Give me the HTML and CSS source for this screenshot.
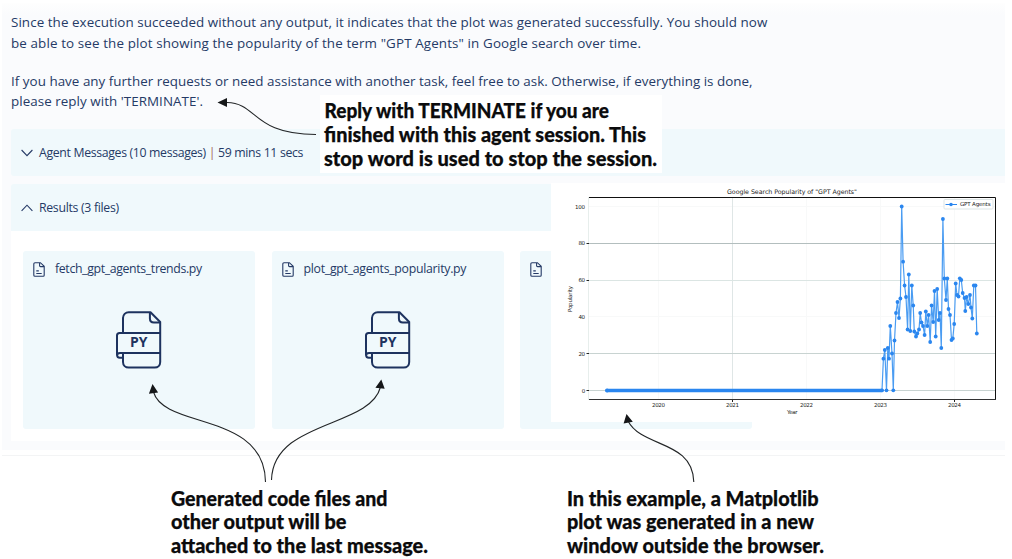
FILE: index.html
```
<!DOCTYPE html>
<html lang="en">
<head>
<meta charset="utf-8">
<title>Agent session results</title>
<link rel="stylesheet" href="styles.css">
</head>
<body>
<svg class="defs" width="0" height="0" aria-hidden="true">
  <symbol id="doc" viewBox="0 0 12 15">
    <path d="M2 .7h5.4l3.800 3.600v9c0 .6-.4 1-1 1H2c-.6 0-1.200-.4-1.200-1V1.700c0-.6.5-1 1.200-1zM6.600.8v2.900c0 .6.4.9.9.9h3.500M3.300 8.900h2.500M3.300 11.500h5.400" fill="none" stroke="currentColor" stroke-width="1.1"/>
  </symbol>
  <symbol id="py" viewBox="0 0 46 58">
    <g fill="none" stroke="currentColor" stroke-width="2" stroke-linejoin="round">
      <path d="M7 21.500V7c0-3.300 2.500-5.700 5.700-5.700H34.500L44.200 11v40c0 3.200-2.300 5.600-5.500 5.600H12.700C9.500 56.600 7 54.200 7 51V42"/>
      <path d="M33.900 1.500v6c0 2.700 1.400 4 4 4H44"/>
      <path d="M44.200 22H3.600c-1.600 0-2.600 1-2.600 2.600V43.500c0 2 1 3.200 2.800 3.200H7M44.200 42H4c-1.700 0-3 .5-3 2.500"/>
    </g>
  </symbol>
</svg>
<main class="page">
  <section class="panel">
    <div class="message">
      <p><span class="l1">Since the execution succeeded without any output, it indicates that the plot was generated successfully. You should now</span><br><span class="l2">be able to see the plot showing the popularity of the term "GPT Agents" in Google search over time.</span></p>
      <p><span class="l3">If you have any further requests or need assistance with another task, feel free to ask. Otherwise, if everything is done,</span><br><span class="l4">please reply with 'TERMINATE'.</span></p>
    </div>
    <div class="bar">
      <svg class="chev" viewBox="0 0 12 8"><path d="M.6 1l5.400 5.600L11.400 1"/></svg>
      <span class="b1">Agent Messages (10 messages) <i>|</i> 59 mins 11 secs</span>
    </div>
    <div class="bar">
      <svg class="chev" viewBox="0 0 12 8"><path d="M.6 6.800L6 1.200l5.400 5.600"/></svg>
      <span class="b2">Results (3 files)</span>
    </div>
    <div class="files">
      <article class="card">
        <header><svg class="doc"><use href="#doc"/></svg><span class="f1">fetch_gpt_agents_trends.py</span></header>
        <svg class="py" viewBox="0 0 46 58"><use href="#py"/><text x="14" y="36.300" textLength="17.500" lengthAdjust="spacingAndGlyphs">PY</text></svg>
      </article>
      <article class="card">
        <header><svg class="doc"><use href="#doc"/></svg><span class="f2">plot_gpt_agents_popularity.py</span></header>
        <svg class="py" viewBox="0 0 46 58"><use href="#py"/><text x="14" y="36.300" textLength="17.500" lengthAdjust="spacingAndGlyphs">PY</text></svg>
      </article>
      <article class="card">
        <header><svg class="doc"><use href="#doc"/></svg></header>
      </article>
    </div>
  </section>
  <div class="rule"></div>
</main>
<svg class="plot" viewBox="551 183 461 239">
  <rect x="551" y="183" width="461" height="239" fill="#fff"/>
  <path d="M658.500 198v201M806.500 198v201M880.500 198v201M954.500 198v201M589 206.500h406M589 316.500h406" stroke="#f8f9f9"/>
  <path d="M732.500 198v201" stroke="#dfe6e6"/>
  <path d="M589 280.500h406" stroke="#dbe5e3"/>
  <path d="M589 353.500h406M589 390.500h406" stroke="#c8d3d1"/>
  <path d="M589 243.500h406" stroke="#b3bebe"/>
  <path d="M588.500 197v203" stroke="#e7eeec"/>
  <path d="M589 197.500h406.500V399.500" fill="none" stroke="#111"/>
  <path d="M589 399.500h407" stroke="#333"/>
  <path d="M586.500 243.500h2.500M586.500 280.500h2.500M586.500 353.500h2.500M586.500 390.500h2.500M732.500 400v2M954.500 400v2" stroke="#222"/>
  <polyline id="series" class="series"/>
  <g id="dots" class="dots"/>
  <path d="M607 390.500H882" stroke="#2a86ef" stroke-width="3.400" stroke-linecap="round"/>
  <g class="tick">
    <text x="575" y="208.500" textLength="10">100</text>
    <text x="578.500" y="245.300" textLength="6.500">80</text>
    <text x="578.500" y="282.200" textLength="6.500">60</text>
    <text x="578.500" y="318.900" textLength="6.500">40</text>
    <text x="578.500" y="355.500" textLength="6.500">20</text>
    <text x="581.700" y="392.500">0</text>
    <text x="652" y="407.300" textLength="13">2020</text>
    <text x="726" y="407.300" textLength="13">2021</text>
    <text x="800" y="407.300" textLength="13">2022</text>
    <text x="874" y="407.300" textLength="13">2023</text>
    <text x="948" y="407.300" textLength="13">2024</text>
    <text x="787" y="414" textLength="10.500">Year</text>
    <text transform="translate(571.500 312) rotate(-90)" textLength="26">Popularity</text>
  </g>
  <text class="title" x="727" y="193.600" textLength="130">Google Search Popularity of "GPT Agents"</text>
  <rect x="944" y="199.500" width="49" height="9.500" rx="1" fill="#fff" stroke="#dde5e6"/>
  <path d="M945.500 204.500h11.500" stroke="#2a86ef"/><circle cx="951" cy="204.500" r="1.800" fill="#2a86ef"/>
  <text class="tick" x="960" y="206.300" textLength="30.500">GPT Agents</text>
</svg>
<svg class="notes" viewBox="0 0 1012 559">
  <rect x="320" y="95" width="342" height="78" fill="#fff"/>
  <g class="arrow">
    <path d="M227 102.500C258 103 252 134.500 316 134.500"/>
    <path d="M153.500 392C164 429 265 412 265.500 482"/>
    <path d="M380.500 387C370 428 273 420 271.500 480"/>
    <path d="M628 421C642 448 693 440 693.800 482"/>
  </g>
  <path d="M217.500 102.500l9.500-4.600v9.200zM152.500 384l5.600 8.600-9.200 1.200zM381.300 379.500l3.400 9.300-9.300-1zM626.500 414l6.300 7.800-9.200 1.700z" fill="#151719"/>
  <g class="callout">
    <text x="324.500" y="118" textLength="284.500" lengthAdjust="spacingAndGlyphs">Reply with TERMINATE if you are</text>
    <text x="324" y="142" textLength="322" lengthAdjust="spacingAndGlyphs">finished with this agent session. This</text>
    <text x="324" y="165.700" textLength="333" lengthAdjust="spacingAndGlyphs">stop word is used to stop the session.</text>
    <text x="171" y="506" textLength="216.500" lengthAdjust="spacingAndGlyphs">Generated code files and</text>
    <text x="171" y="529.300" textLength="175.500" lengthAdjust="spacingAndGlyphs">other output will be</text>
    <text x="171" y="553.300" textLength="257" lengthAdjust="spacingAndGlyphs">attached to the last message.</text>
    <text x="567" y="506" textLength="251.500" lengthAdjust="spacingAndGlyphs">In this example, a Matplotlib</text>
    <text x="567" y="529.300" textLength="247" lengthAdjust="spacingAndGlyphs">plot was generated in a new</text>
    <text x="567" y="553.300" textLength="257" lengthAdjust="spacingAndGlyphs">window outside the browser.</text>
  </g>
</svg>
<script src="chart.js"></script>
</body>
</html>
```
FILE: styles.css
```
body { margin: 0; width: 1012px; height: 559px; overflow: hidden; background: #fff; position: relative; font-family: "Open Sans", "Noto Sans", sans-serif; color: #253a66; }
.defs { position: absolute; }
.page { padding: 3px 7px 0 2px; }
.panel { box-sizing: border-box; height: 447px; padding: 9px 0 9px 9px; background: linear-gradient(#fefefe, #fafbfd 12px); display: flex; flex-direction: column; }
.message { height: 109px; font-size: 13.400px; line-height: 20.500px; white-space: nowrap; }
.message p { margin: 0 0 17.500px; }
.l1 { letter-spacing: .07px; }
.l2 { letter-spacing: .12px; }
.l3 { letter-spacing: .03px; }
.l4 { letter-spacing: .05px; }
.b1 { letter-spacing: -.34px; }
.b2 { letter-spacing: -.31px; }
.f1 { letter-spacing: -.35px; }
.f2 { letter-spacing: -.28px; }
.bar { box-sizing: border-box; height: 47px; margin-top: 8px; padding-left: 10px; display: flex; align-items: center; gap: 6px; background: #f0f9fc; border-radius: 3px 0 0 3px; font-size: 12.300px; white-space: nowrap; }
.bar span { padding-bottom: 1px; }
.bar i { font-style: normal; color: #a5695a; }
.bar + .bar { border-radius: 3px 0 0 0; }
.chev { width: 12px; height: 8px; fill: none; stroke: #253a66; stroke-width: 1.100; }
.files { flex: 1; background: #fff; padding: 20px 253px 12px 12px; display: grid; grid-template-columns: repeat(3, 1fr); gap: 16.500px; }
.card { background: #f0f9fc; border-radius: 3px; display: flex; flex-direction: column; align-items: center; }
.card header { align-self: stretch; height: 36px; padding-left: 10px; display: flex; align-items: center; gap: 10px; font-size: 12.300px; white-space: nowrap; }
.card header span { padding-bottom: 2px; }
.doc { width: 12px; height: 15px; flex: none; }
.py { width: 46px; height: 58px; margin-top: 24px; flex: none; color: #1e335f; }
.py text { font: 700 14px "Open Sans", sans-serif; fill: #1e335f; }
.rule { height: 1px; margin-top: 5px; background: #f3f4f5; }
.plot { position: absolute; left: 551px; top: 183px; width: 461px; height: 239px; }
.notes { position: absolute; left: 0; top: 0; width: 1012px; height: 559px; }
.tick { font: 5.500px "DejaVu Sans", sans-serif; fill: #222; }
.title { font: 6.300px "DejaVu Sans", sans-serif; fill: #222; }
.series { fill: none; stroke: #4a9cf2; stroke-width: 1.200; stroke-linejoin: round; }
.dots circle { fill: #2a86ef; }
.arrow { fill: none; stroke: #222527; stroke-width: 1.100; }
.callout { font: 900 21px Lato, sans-serif; fill: #0b0b0c; stroke: #0b0b0c; stroke-width: .25px; }
```
FILE: chart.js
```
const points = [[607,390.5],[882,390.3],[883.4,358.7],[884.8,350],[886.5,390.3],[887.8,348],[889,358.7],[890.3,326],[892,353.5],[893.3,390.3],[894.5,340.5],[896,313],[897.5,302],[899,318],[900.4,298.5],[901.7,206.5],[903.1,261.7],[904.6,285.5],[906,297],[907.6,329.5],[908.8,274.5],[910.3,331],[911.8,285.5],[913.2,305.5],[914.3,331.5],[916,336.5],[917.3,333.5],[919,329.5],[920.2,313],[921.5,322.5],[923,326],[924.6,335],[925.8,311.5],[927.3,326],[928.6,315],[930.2,342],[931.6,305.5],[933.2,322],[934.5,291],[935.7,336.5],[937.2,289],[938.7,320],[940,313],[941.3,348],[942.9,219],[944.3,278.5],[946,300],[947.3,278.5],[948.5,309],[950,315],[951.5,340],[952.8,338.5],[954.2,324],[955.7,283.5],[957,295],[958.5,296.5],[959.8,278.3],[961.3,280],[962.7,293],[964.5,298],[965.3,311],[966.6,297],[968.3,304],[970,295],[971,307.5],[972.3,318.5],[973.8,285.5],[975.5,285.5],[976.8,333.5]];
document.getElementById("series").setAttribute("points", points.map(p => p.join(",")).join(" "));
const dots = document.getElementById("dots");
for (const [x, y] of points) {
  const c = document.createElementNS("http://www.w3.org/2000/svg", "circle");
  c.setAttribute("cx", x);
  c.setAttribute("cy", y);
  c.setAttribute("r", 1.9);
  dots.appendChild(c);
}
```
